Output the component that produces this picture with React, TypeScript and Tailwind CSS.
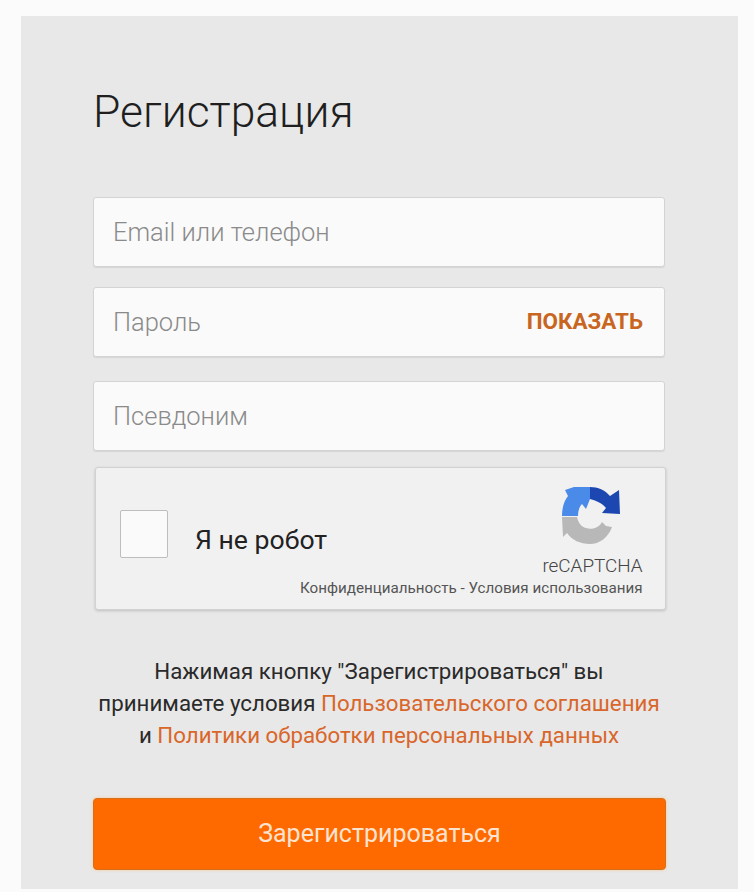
// Форма регистрации
const FONT = "font-['Roboto','Liberation_Sans',sans-serif]"

function Field({ label, action, className = '' }: { label: string; action?: string; className?: string }) {
  return (
    <div
      className={`flex h-[70px] items-center justify-between rounded-[3px] border border-[#d4d4d4] bg-[#fafafa] pl-[19px] pr-[21px] shadow-[0_1px_1px_rgba(0,0,0,0.08)] ${className}`}
    >
      <span className="text-[25.5px] font-light text-[#8a8a8a]">{label}</span>
      {action && <span className="text-[22.4px] font-bold text-[#c8651f]">{action}</span>}
    </div>
  )
}

function RecaptchaLogo() {
  return (
    <svg width="59" height="60" viewBox="0 0 59 60" className="block">
      {/* серая нижняя часть */}
      <path d="M0 30H15C16 35 19 40 24 41C30 43 37 41 40 35L44 39L50 40C46 51 37 57 28 57C18 57 10 53 5 46L1 50Z" fill="#b8b8b8" />
      {/* голубая левая часть */}
      <path d="M0 29C0 21 2 14 6 9L3 3L12 0L28 0L28 12L24 22L20 17C17 20 16 25 16 29Z" fill="#4a8ae8" />
      {/* тёмно-синяя правая часть */}
      <path d="M28 0C36 0 43 3 48 9L57 3L58 27L40 26L44 21C40 16 35 14 28 12Z" fill="#1c47b0" />
    </svg>
  )
}

export default function App() {
  return (
    <div className={`min-h-[892px] bg-[#fbfbfb] pl-[21px] pt-[16px] ${FONT}`}>
      <div className="h-[873px] w-[717px] bg-[#e8e8e8] pl-[72px] pt-[68px]">
        <h1 className="whitespace-nowrap text-[44.4px] font-light leading-[56px] text-[#1f1f1f]">Регистрация</h1>

        <div className="mt-[57px] w-[572px]">
          <Field label="Email или телефон" />
          <Field label="Пароль" action="ПОКАЗАТЬ" className="mt-[20px]" />
          <Field label="Псевдоним" className="mt-[24px]" />

          <div className="ml-[2px] mt-[16px] flex h-[143px] w-[571px] items-start rounded-[3px] border border-[#d2d2d2] bg-[#f1f1f1] shadow-[0_1px_3px_rgba(0,0,0,0.18)]">
            {/* подпись заходит на ширину правой колонки, как в оригинале */}
            <div className="flex w-[204px] shrink-0 items-center whitespace-nowrap pl-[24px] pt-[41px]">
              <div className="h-[48px] w-[48px] shrink-0 rounded-[2px] border border-[#bdbdbd] bg-[#fafafa]" />
              <span className="ml-[27px] mt-[11px] text-[26.6px] text-[#222]">Я не робот</span>
            </div>
            <div className="flex flex-col items-end whitespace-nowrap pr-[23px] pt-[19px]">
              <div className="mr-[22px]">
                <RecaptchaLogo />
              </div>
              <span className="mt-[7px] text-[18.9px] font-light leading-[24px] text-[#444]">reCAPTCHA</span>
              <span className="text-[15.2px] leading-[20px] text-[#555]">Конфиденциальность - Условия использования</span>
            </div>
          </div>

          <p className="mt-[45px] text-center text-[22.3px] leading-[32px] text-[#2a2a2a]">
            Нажимая кнопку "Зарегистрироваться" вы
            <br />
            принимаете условия <span className="text-[#d9662a]">Пользовательского соглашения</span>
            <br />и <span className="text-[#d9662a]">Политики обработки персональных данных</span>
          </p>

          <button className="mt-[47px] block h-[72px] w-[573px] rounded-[4px] border border-[#d4701a] bg-[#ff6a00] text-[25px] text-[#fbe3cf] shadow-[0_0_3px_rgba(255,190,120,0.8)]">
            Зарегистрироваться
          </button>
        </div>
      </div>
    </div>
  )
}
